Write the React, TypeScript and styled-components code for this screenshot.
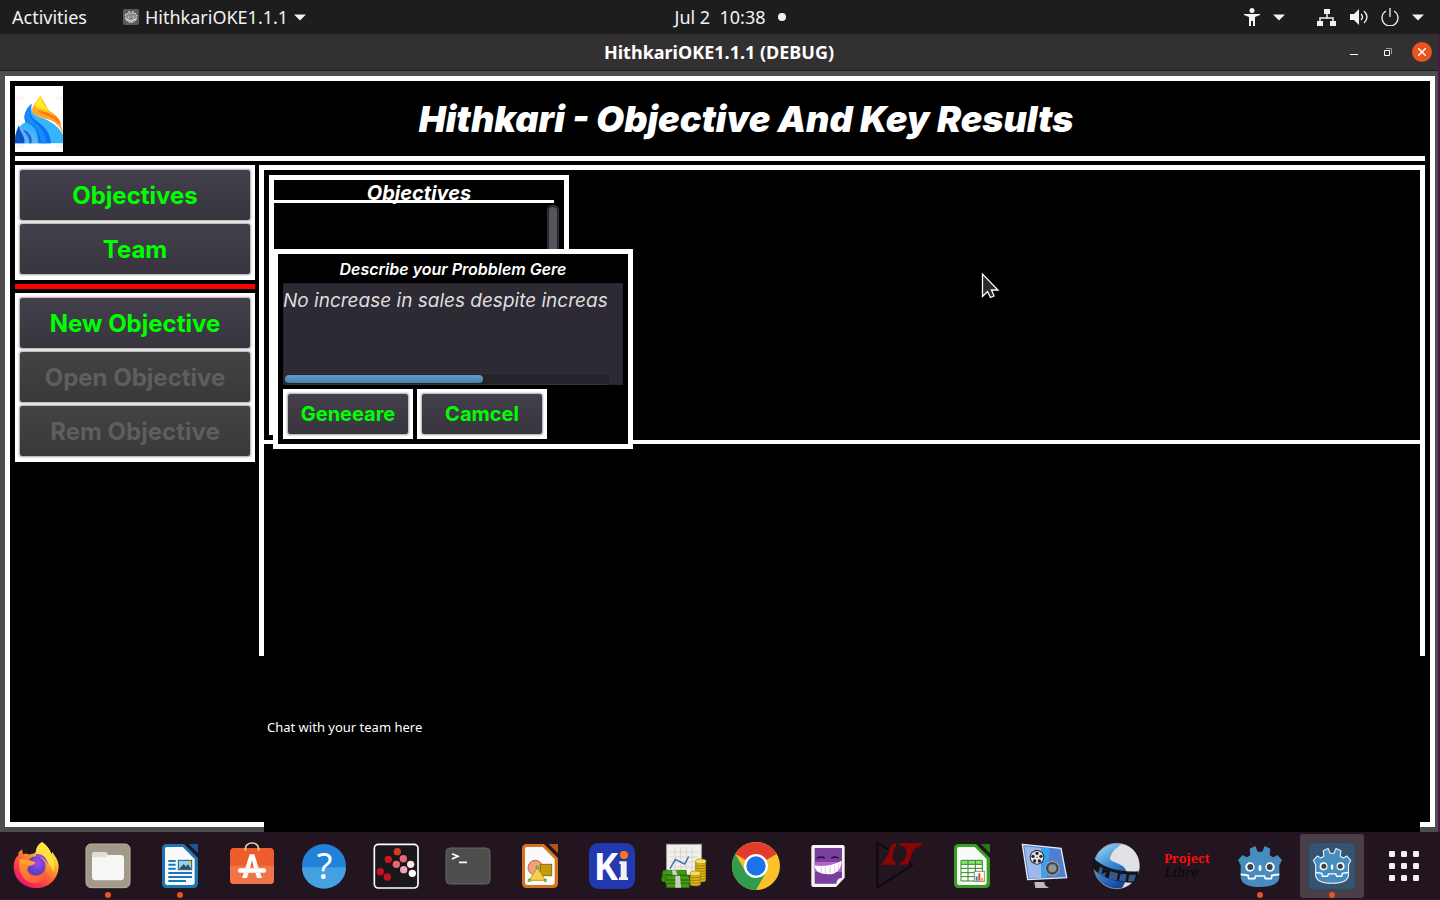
import React from "react";
import styled, { createGlobalStyle } from "styled-components";

const GlobalStyle = createGlobalStyle`
  * { box-sizing: border-box; }
  body {
    margin: 0;
    background: #4b1846;
    color: #fff;
    font-family: Inter, "Liberation Sans", sans-serif;
  }
  h1, h2, p { margin: 0; }
  button, textarea { font-family: inherit; }
  svg { display: block; }
`;

const systemFont = `"Noto Sans", "Open Sans", sans-serif`;

const Desktop = styled.div`
  min-height: 100vh;
  display: flex;
  flex-direction: column;
  overflow: hidden;
`;

/* ---------- system bar ---------- */

const SystemBar = styled.header`
  height: 34px;
  flex: none;
  display: grid;
  grid-template-columns: 1fr auto 1fr;
  align-items: center;
  background: #1d1d1d;
  color: #f2f2f2;
  font-family: ${systemFont};
  font-size: 18px;
  line-height: 24px;
`;

const BarGroup = styled.div<{ $end?: boolean }>`
  display: flex;
  align-items: center;
  justify-content: ${(p) => (p.$end ? "flex-end" : "flex-start")};
  gap: ${(p) => (p.$end ? "12px" : "36px")};
  padding: ${(p) => (p.$end ? "0 16px" : "0 12px")};
`;

const BarButton = styled.button<{ $gap?: number }>`
  display: flex;
  align-items: center;
  gap: ${(p) => p.$gap ?? 6}px;
  padding: 0;
  border: 0;
  background: none;
  color: inherit;
  font: inherit;
  white-space: pre;
`;

/* Padding balances the notification dot so that the time itself is centred. */
const ClockButton = styled(BarButton)`
  padding-left: 20px;
`;

const Dot = styled.span`
  width: 8px;
  height: 8px;
  border-radius: 50%;
  background: #f2f2f2;
`;

const Spacer = styled.span`
  width: 8px;
`;

/* ---------- window ---------- */

const Window = styled.section`
  flex: 1;
  display: flex;
  flex-direction: column;
  margin-right: 2px;
  background: #4d4d4d;
`;

const TitleBar = styled.div`
  height: 37px;
  flex: none;
  display: grid;
  grid-template-columns: 1fr auto 1fr;
  align-items: center;
  background: #333031;
  border-bottom: 1px solid #1f1e1e;
`;

const WindowTitle = styled.p`
  grid-column: 2;
  font: 700 18px/24px ${systemFont};
`;

const WindowControls = styled.div`
  display: flex;
  justify-content: flex-end;
  align-items: center;
  gap: 15px;
  padding-right: 6px;
`;

const ControlButton = styled.button<{ $close?: boolean }>`
  width: ${(p) => (p.$close ? "20px" : "19px")};
  height: 20px;
  display: grid;
  place-items: center;
  padding: 0;
  border: 0;
  border-radius: 50%;
  background: ${(p) => (p.$close ? "#e95420" : "transparent")};
`;

const Frame = styled.main`
  flex: 1;
  display: flex;
  flex-direction: column;
  gap: 4px;
  margin: 5px 3px 5px 5px;
  padding: 5px;
  border: 5px solid #fff;
  background: #000;
`;

const AppHeader = styled.header`
  display: flex;
  align-items: center;
  gap: 4px;
`;

const Logo = styled.span`
  width: 48px;
  height: 66px;
  background: #fff;
`;

const AppTitle = styled.h1`
  flex: 1;
  text-align: center;
  font-size: 36px;
  line-height: 44px;
  font-weight: 900;
  font-style: italic;
`;

const Rule = styled.div<{ $color?: string }>`
  height: 5px;
  flex: none;
  background: ${(p) => p.$color ?? "#fff"};
`;

const Body = styled.div`
  flex: 1;
  display: flex;
  gap: 4px;
`;

const Sidebar = styled.nav`
  width: 240px;
  flex: none;
  display: flex;
  flex-direction: column;
  gap: 4px;
`;

const ButtonGroup = styled.div`
  display: flex;
  flex-direction: column;
  gap: 4px;
  padding: 5px 5px 6px;
  background: #fff;
`;

const GameButton = styled.button<{ $compact?: boolean }>`
  height: ${(p) => (p.$compact ? "40px" : "50px")};
  width: ${(p) => (p.$compact ? "120px" : "100%")};
  padding: ${(p) => (p.$compact ? "0" : "2px 0 0")};
  border: 0;
  border-radius: 2px;
  background: linear-gradient(#43404b, #38353f);
  box-shadow: 0 0 2px 1px rgba(0, 0, 0, 0.35);
  color: #00ff00;
  font-size: ${(p) => (p.$compact ? "20px" : "24px")};
  line-height: 30px;
  font-weight: 700;
  &:disabled {
    background: linear-gradient(#434343, #393939);
    color: #5e5e5e;
  }
`;

const Content = styled.div`
  flex: 1;
  min-width: 0;
  display: flex;
  flex-direction: column;
`;

const Workspace = styled.section`
  display: flex;
  flex-direction: column;
  border: 5px solid #fff;
  border-bottom: 0;
`;

const Upper = styled.div`
  position: relative;
  min-height: 270px;
  padding: 5px;
`;

const Divider = styled.div`
  height: 4px;
  background: #fff;
`;

const Lower = styled.div`
  min-height: 212px;
`;

const ObjectivesPanel = styled.section`
  width: 300px;
  height: 260px;
  display: flex;
  flex-direction: column;
  border: 5px solid #fff;
`;

const PanelTitle = styled.h2`
  height: 20px;
  text-align: center;
  font-size: 20px;
  line-height: 26px;
  font-weight: 700;
  font-style: italic;
`;

const PanelList = styled.div`
  flex: 1;
  width: 285px;
  display: flex;
  justify-content: flex-end;
  padding-top: 2px;
`;

const PanelRule = styled.div`
  width: 280px;
  height: 3px;
  background: #fff;
`;

const ScrollTrack = styled.div<{ $horizontal?: boolean }>`
  width: ${(p) => (p.$horizontal ? "328px" : "12px")};
  height: ${(p) => (p.$horizontal ? "12px" : "auto")};
  padding: 2px;
  border-radius: 5px;
  background: #25232a;
  box-shadow: inset 0 0 0 1px #35323b;
`;

const ScrollThumb = styled.div<{ $horizontal?: boolean }>`
  width: ${(p) => (p.$horizontal ? "198px" : "8px")};
  height: ${(p) => (p.$horizontal ? "8px" : "100%")};
  border-radius: 4px;
  background: ${(p) =>
    p.$horizontal ? "linear-gradient(#5f9fca, #4a7fa9)" : "#56535c"};
`;

const Dialog = styled.form`
  position: absolute;
  left: 9px;
  top: 79px;
  width: 360px;
  display: flex;
  flex-direction: column;
  padding: 5px;
  border: 5px solid #fff;
  background: #000;
`;

const DialogLabel = styled.label`
  height: 24px;
  text-align: center;
  font-size: 16px;
  line-height: 20px;
  font-weight: 600;
  font-style: italic;
`;

const Editor = styled.div`
  position: relative;
  height: 102px;
  background: #2d2a33;
  box-shadow: inset 0 0 0 1px #25232b;
`;

const ProblemText = styled.textarea`
  display: block;
  width: 100%;
  height: 80px;
  padding: 5px 0 0;
  border: 0;
  outline: 0;
  resize: none;
  overflow: hidden;
  white-space: pre;
  background: transparent;
  color: #dedede;
  font-size: 19px;
  line-height: 26px;
  font-style: italic;
`;

const EditorScroll = styled.div`
  position: absolute;
  left: 0;
  bottom: 0;
`;

const DialogActions = styled.div`
  display: flex;
  gap: 4px;
  margin-top: 4px;
`;

const ActionFrame = styled.div`
  padding: 5px;
  background: #fff;
`;

const Pointer = styled.svg`
  position: absolute;
  left: 717px;
  top: 102px;
`;

/* The chat area runs past the window's lower edge. */
const Chat = styled.section`
  flex: 1;
  min-height: 176px;
  margin: 0 5px -15px;
  padding: 61px 3px;
  background: #000;
  font: 400 13px/20px "Noto Sans", sans-serif;
`;

/* ---------- dock ---------- */

const Dock = styled.nav`
  position: relative;
  height: 68px;
  flex: none;
  display: grid;
  grid-template-columns: repeat(20, 1fr);
  justify-items: center;
  padding: 2px 0 1px;
  background: #23151f;
  border-bottom: 1px solid #35192f;
`;

const DockButton = styled.button<{ $active?: boolean; $running?: boolean }>`
  position: relative;
  width: 64px;
  height: 64px;
  display: grid;
  place-items: center;
  padding: 0;
  border: 0;
  border-radius: 3px;
  background: ${(p) => (p.$active ? "#4a3f47" : "transparent")};
  &::after {
    content: "";
    display: ${(p) => (p.$running ? "block" : "none")};
    position: absolute;
    left: 29px;
    bottom: 0;
    width: 6px;
    height: 6px;
    border-radius: 50%;
    background: #e95420;
  }
`;

const Caret = () => (
  <svg width="12" height="7" viewBox="0 0 12 7" aria-hidden="true">
    <path d="M0 .5h12L6 6.5z" fill="#f2f2f2" />
  </svg>
);

const godotHead =
  "M14 70 L6 54 L20 39 L32 46 L43 40 L41 20 L58 12 L65 29 H79 L86 12 L103 20 L101 40 L112 46 L124 39 L138 54 L130 70 V104 C130 126 104 135 72 135 C40 135 14 126 14 104Z";

const GodotFace = ({ outlined }: { outlined?: boolean }) => (
  <g>
    <path
      d={godotHead}
      fill="#478cbf"
      stroke={outlined ? "#e6eff6" : "none"}
      strokeWidth={outlined ? 4 : 0}
      strokeLinejoin="round"
    />
    <path
      d="M14 97 L36 100 L38 110 H56 L59 102 H85 L88 110 H106 L108 100 L130 97"
      fill="none"
      stroke="#fff"
      strokeWidth="5"
    />
    <circle cx="42" cy="75" r="14" fill="#fff" />
    <circle cx="102" cy="75" r="14" fill="#fff" />
    <circle cx="43" cy="75" r="9" fill="#414042" />
    <circle cx="101" cy="75" r="9" fill="#414042" />
    <rect x="68" y="69" width="8" height="18" rx="4" fill="#fff" />
  </g>
);

const Firefox = () => (
  <g>
    <defs>
      <linearGradient id="ffBody" x1=".85" y1=".1" x2=".25" y2=".95">
        <stop offset="0" stopColor="#fff44f" />
        <stop offset=".3" stopColor="#ffb52a" />
        <stop offset=".6" stopColor="#ff5a36" />
        <stop offset="1" stopColor="#f0136f" />
      </linearGradient>
      <radialGradient id="ffGlobe" cx=".6" cy=".35">
        <stop offset="0" stopColor="#a34bf0" />
        <stop offset="1" stopColor="#5a3fc8" />
      </radialGradient>
      <linearGradient id="ffFox" x1="0" y1="0" x2="1" y2="1">
        <stop offset="0" stopColor="#ff9a2a" />
        <stop offset="1" stopColor="#ff4f3f" />
      </linearGradient>
    </defs>
    <path
      d="M90 0C104 10 114 22 118 36L121 30C134 48 140 60 140 74C138 112 110 138 73 138C34 138 5 110 5 74C5 58 10 48 19 39L20 31L30 22L33 37C42 34 48 36 52 38C60 34 67 36 73 29C72 16 78 8 90 0Z"
      fill="url(#ffBody)"
    />
    <path d="M90 0C104 10 116 24 119 42C126 54 130 70 125 88C116 70 104 50 74 44C66 28 76 8 90 0Z" fill="#ffe642" opacity=".85" />
    <circle cx="72" cy="72" r="29" fill="url(#ffGlobe)" />
    <path d="M72 36C92 34 106 48 108 68C98 48 88 44 72 44Z" fill="#9b3fe0" />
    <path
      d="M22 52C36 48 52 54 70 60C72 68 60 70 50 73C44 80 44 92 58 100C76 106 94 98 102 84C108 110 86 124 66 124C36 122 18 94 22 52Z"
      fill="url(#ffFox)"
    />
    <path d="M22 54C38 50 56 56 70 62C60 70 46 72 34 66Z" fill="#ffa22c" />
  </g>
);

const Files = () => (
  <g>
    <rect x="6" y="6" width="132" height="131" rx="15" fill="#a29a89" />
    <rect x="6" y="6" width="132" height="131" rx="15" fill="none" stroke="#bbb5a6" strokeWidth="3" />
    <path d="M24 42q0-12 10-12h28q6 0 10 9h38q10 0 10 10v56q0 10-10 10H34q-10 0-10-10z" fill="#f7f6f4" />
    <path d="M24 46v-6q0-10 10-10h28q6 0 10 9l-8 7z" fill="#deddd6" />
  </g>
);

const OfficePage = ({ color, dark }: { color: string; dark: string }) => (
  <g>
    <path d="M32 6h52l42 42v76q0 14-14 14H32q-14 0-14-14V20q0-14 14-14z" fill={color} />
    <path d="M32 15h48l36 36v70q0 8-8 8H34q-7 0-7-8V22q0-7 5-7z" fill="#fafafa" />
    <path d="M98 6h28v28z" fill={dark} />
  </g>
);

const Writer = () => (
  <g>
    <OfficePage color="#1d76b4" dark="#0f5d93" />
    <path d="M37 57h22M37 68h22M37 80h22M37 93h71M37 105h71M37 117h53" stroke="#1678b8" strokeWidth="6" />
    <rect x="67" y="55" width="40" height="28" fill="#8fd0f4" stroke="#175d8a" strokeWidth="3" />
    <path d="M69 82l14-16 7 8 6-7 10 15z" fill="#3c4a52" />
    <circle cx="100" cy="61" r="5" fill="#f4c320" />
  </g>
);

const Software = () => (
  <g>
    <rect x="6" y="18" width="132" height="108" rx="12" fill="#ed5d2c" />
    <path d="M6 72h132v42q0 12-12 12H18q-12 0-12-12z" fill="#f07648" />
    <path d="M52 26V20a20 17 0 0 1 40 0v6" fill="none" stroke="#f1cf9c" strokeWidth="5" />
    <path d="M65 37h14l13 42H78l-6-24-6 24H52zM48 92h14l-5 16H42zM82 92h14l6 16H87z" fill="#fff" />
    <rect x="30" y="79" width="84" height="13" rx="6" fill="#fff" />
  </g>
);

const Help = () => (
  <g>
    <circle cx="72" cy="72" r="66" fill="#2082d8" />
    <path d="M6 76a66 64 0 0 0 132 0z" fill="#43a1e2" />
    <text x="74" y="112" textAnchor="middle" fontFamily="Noto Sans, sans-serif" fontSize="108" fill="#fff">?</text>
  </g>
);

const Scatter = () => (
  <g>
    <rect x="7" y="7" width="131" height="131" rx="12" fill="#19171a" stroke="#fff" strokeWidth="5" />
    <circle cx="76" cy="29" r="11" fill="#d23b25" />
    <circle cx="49" cy="52" r="11" fill="#cf1523" />
    <circle cx="94" cy="50" r="11" fill="#e86775" />
    <circle cx="73" cy="67" r="11" fill="#e86775" />
    <circle cx="116" cy="67" r="11" fill="#fbe4e8" />
    <circle cx="95" cy="83" r="11" fill="#f2a5b5" />
    <circle cx="121" cy="94" r="11" fill="#fff" />
    <circle cx="25" cy="89" r="11" fill="#c71020" />
    <circle cx="46" cy="105" r="11" fill="#c71020" />
  </g>
);

const Terminal = () => (
  <g>
    <rect x="6" y="18" width="132" height="108" rx="12" fill="#4d4d4d" stroke="#666" strokeWidth="3" />
    <path d="M24 35l18 8-18 8M45 61h24" fill="none" stroke="#fff" strokeWidth="5" />
  </g>
);

const Draw = () => (
  <g>
    <OfficePage color="#d4741c" dark="#b35a10" />
    <circle cx="58" cy="77" r="22" fill="#f0a07c" stroke="#c8643c" strokeWidth="3" />
    <rect x="73" y="67" width="34" height="34" fill="#c39a10" stroke="#8d6c05" strokeWidth="3" />
    <path d="M64 77l24 38H40z" fill="#f6cf55" stroke="#c39a10" strokeWidth="3" />
    <path d="M61 74h6v6h-6zM37 112h6v6h-6zM85 112h6v6h-6z" fill="#fff" stroke="#33a02c" strokeWidth="3" />
  </g>
);

const KiCad = () => (
  <g>
    <rect x="3" y="3" width="138" height="138" rx="28" fill="#2438b0" />
    <text x="17" y="114" fontFamily="Noto Sans, sans-serif" fontWeight="700" fontSize="110" fill="#fff">K</text>
    <path d="M94 58h22v48h4v8H93v-8h5V66h-4z" fill="#f1f1f1" />
    <circle cx="108" cy="39" r="12" fill="#ff7a0c" />
  </g>
);

const Coins = ({ x, y, n }: { x: number; y: number; n: number }) => (
  <g>
    <rect x={x} y={y} width="32" height={n * 8} fill="#b08a06" />
    {Array.from({ length: n }, (_, i) => n - i).map((i) => (
      <ellipse key={i} cx={x + 16} cy={y + i * 8} rx="16" ry="6" fill="#d9b51c" stroke="#8a6b04" strokeWidth="2" />
    ))}
    <ellipse cx={x + 16} cy={y} rx="16" ry="7" fill="#f4e069" stroke="#a98708" strokeWidth="2" />
  </g>
);

const Finance = () => (
  <g>
    <rect x="20" y="7" width="104" height="92" fill="#f1f1ec" stroke="#aaa" strokeWidth="3" />
    <path d="M30 30h84M30 45h84M30 60h84M30 75h84M45 15v75M62 15v75M79 15v75M96 15v75" stroke="#c9ccc6" strokeWidth="2" />
    <path d="M30 80l16-28 28 14 12-22" fill="none" stroke="#3b68ad" strokeWidth="4" />
    <Coins x={106} y={58} n={7} />
    <g fill="#419a18" stroke="#256507" strokeWidth="2">
      <path d="M10 85h68l2 14H6zM6 99h74v8H6zM4 107h76v12H6z" />
      <path d="M20 101h66l4 13H16zM16 114h74v10H16zM18 124h70v13H20z" />
    </g>
    <path d="M36 85h12l4 14H38zM46 101h14l3 36H46z" fill="#c9cfbf" />
    <Coins x={90} y={94} n={4} />
  </g>
);

const Chrome = () => (
  <g>
    <circle cx="72" cy="72" r="72" fill="#fbc12b" />
    <path d="M72 72L10 36A72 72 0 0 1 134 36z" fill="#e33b2e" />
    <path d="M41 90L10 36A72 72 0 0 0 72 144L103 90z" fill="#2f9c4e" />
    <circle cx="72" cy="72" r="36" fill="#fff" />
    <circle cx="72" cy="72" r="29" fill="#1a73e8" />
  </g>
);

const Comic = () => (
  <g>
    <path d="M28 9h88q6 0 6 6v92l-26 28H28q-6 0-6-6V15q0-6 6-6z" fill="#f5f5f5" />
    <path d="M32 18h82v90q-16 0-17 17H32z" fill="#7a3f9c" />
    <path d="M32 60h82v30H32z" fill="#b565c8" />
    <path d="M38 49q14-8 24 0M82 49q12-8 22 0" fill="none" stroke="#24102e" strokeWidth="4" />
    <path d="M31 70q40 8 82-14-2 40-40 41-38 0-42-27z" fill="#fff" />
    <path d="M52 75v17M64 75v20M78 73v21M92 69v21M104 63v18" stroke="#cfa8dc" strokeWidth="2" />
  </g>
);

const LtSpice = () => (
  <g>
    <path d="M36 22L4 3v134l105-68-12-8" fill="none" stroke="#09060a" strokeWidth="4" />
    <path d="M62 3C48 4 44 12 40 26C36 42 26 54 16 68H62L58 62C46 54 48 30 60 14Z" fill="#8b0505" />
    <path d="M72 3H140L130 16H122C110 22 106 42 96 68H70L72 63C90 54 98 32 86 14L70 10Z" fill="#8b0505" />
  </g>
);

const Calc = () => (
  <g>
    <OfficePage color="#35a01f" dark="#237c10" />
    <path d="M39 55h64v62H39z" fill="#fff" />
    <path d="M39 55h64v12H39z" fill="#8fe077" />
    <path d="M39 55h64v62H39zM39 67h64M39 79h64M39 92h64M39 104h64M60 55v62M82 55v62" fill="none" stroke="#2c8a1b" strokeWidth="3" />
    <rect x="79" y="88" width="30" height="30" fill="#fff" stroke="#888" strokeWidth="3" />
    <path d="M83 103h6v13h-6z" fill="#1a8fd0" />
    <path d="M91 94h6v22h-6z" fill="#e3501c" />
    <path d="M99 108h6v8h-6z" fill="#efb519" />
  </g>
);

const Recorder = () => (
  <g>
    <path d="M7 7l116 12 17 88-117 6z" fill="#4f7fd0" stroke="#e8ecf2" strokeWidth="4" />
    <path d="M13 13l50 5 2 90-38 1z" fill="#9fb8ea" />
    <path d="M63 18h26l-8 89H65z" fill="#39a2ee" />
    <circle cx="51" cy="46" r="22" fill="#26262c" />
    <circle cx="51" cy="46" r="19" fill="#e6e8ea" />
    {[[51, 34], [63, 43], [58, 57], [44, 57], [39, 43]].map(([x, y]) => (
      <circle key={`${x}-${y}`} cx={x} cy={y} r="5" fill="#26262c" />
    ))}
    <circle cx="51" cy="46" r="2" fill="#26262c" />
    <circle cx="97" cy="79" r="21" fill="#46494e" stroke="#9b9ea4" strokeWidth="4" />
    <circle cx="97" cy="79" r="12" fill="#8e949c" />
    <path d="M43 120h30l2 10 12 8H46z" fill="#b9bcba" />
  </g>
);

const OpenShot = () => (
  <g>
    <defs>
      <linearGradient id="osBall" x1="0" y1="0" x2=".6" y2="1">
        <stop offset="0" stopColor="#a9e2fa" />
        <stop offset=".5" stopColor="#3b8bd2" />
        <stop offset="1" stopColor="#0e3c9c" />
      </linearGradient>
    </defs>
    <circle cx="74" cy="72" r="68" fill="url(#osBall)" stroke="#8d9196" strokeWidth="3" />
    <path d="M90 6c36 8 54 36 52 72-4 30-28 54-52 60 20-30 18-54 2-66C74 60 46 58 56 42 64 24 76 14 90 6z" fill="#dfe1e3" />
    <path d="M2 46c30 32 80 46 138 42l-6 34C80 124 24 108 0 76z" fill="#141518" />
    <path d="M24 74l20 10-6 22-20-12zM54 88l24 6-4 22-24-6zM86 96l18 1-4 22-20-3zM112 98h20l-6 20h-18z" fill="#33598e" />
    <path d="M32 78l14 10-16 8z" fill="#0b0b0c" />
  </g>
);

const ProjectLibre = () => (
  <g>
    <text x="0" y="62" fontFamily="Noto Serif, DejaVu Serif, serif" fontWeight="700" fontSize="38" fill="#fb0d0d">Project</text>
    <text x="2" y="104" fontFamily="DejaVu Serif, serif" fontStyle="italic" fontSize="38" fill="#090508">Libre</text>
  </g>
);

const GodotApp = () => (
  <g>
    <rect x="2" y="2" width="140" height="140" rx="14" fill="#365370" stroke="#2d4962" strokeWidth="3" />
    <g transform="translate(11 9) scale(.85)">
      <GodotFace outlined />
    </g>
  </g>
);

const AppsGrid = () => (
  <g fill="#f2f0f1">
    {[27, 63, 99].map((y) =>
      [27, 63, 99].map((x) => <rect key={`${x}-${y}`} x={x} y={y} width="18" height="18" rx="4" />)
    )}
  </g>
);

const dockItems: { name: string; art: React.ComponentType; running?: boolean; active?: boolean }[] = [
  { name: "Firefox", art: Firefox },
  { name: "Files", art: Files, running: true },
  { name: "Writer", art: Writer, running: true },
  { name: "Software", art: Software },
  { name: "Help", art: Help },
  { name: "Scatter", art: Scatter },
  { name: "Terminal", art: Terminal },
  { name: "Draw", art: Draw },
  { name: "KiCad", art: KiCad },
  { name: "Finance", art: Finance },
  { name: "Chrome", art: Chrome },
  { name: "Comics", art: Comic },
  { name: "LTspice", art: LtSpice },
  { name: "Calc", art: Calc },
  { name: "Recorder", art: Recorder },
  { name: "OpenShot", art: OpenShot },
  { name: "ProjectLibre", art: ProjectLibre },
  { name: "Godot", art: GodotFace, running: true },
  { name: "HithkariOKE", art: GodotApp, running: true, active: true },
  { name: "Show applications", art: AppsGrid },
];

export default function App() {
  return (
    <Desktop>
      <GlobalStyle />
      <SystemBar>
        <BarGroup>
          <BarButton>Activities</BarButton>
          <BarButton>
            <svg width="16" height="16" viewBox="0 0 16 16" aria-hidden="true">
              <rect width="16" height="16" rx="2" fill="#5b5b5b" />
              <path d="M2 6l2-2 1 1 1-3 1 2h2l1-2 1 3 1-1 2 2-1 5q-5 5-10 0z" fill="#8d8d8d" stroke="#ddd" strokeWidth="1" strokeDasharray="2 1" />
              <path d="M3 10l3 1 1 1h2l1-1 3-1M5 8h1M10 8h1" fill="none" stroke="#eee" />
            </svg>
            HithkariOKE1.1.1
            <Caret />
          </BarButton>
        </BarGroup>
        <ClockButton $gap={12}>
          {"Jul 2  10:38"}
          <Dot />
        </ClockButton>
        <BarGroup $end>
          <BarButton $gap={13} aria-label="Accessibility">
            <svg width="16" height="18" viewBox="0 0 16 18" aria-hidden="true">
              <circle cx="8" cy="2.500" r="2.500" fill="#f2f2f2" />
              <path d="M0 6h16v1l-5 2v9H9v-5H7v5H5V9L0 7z" fill="#f2f2f2" />
            </svg>
            <Caret />
          </BarButton>
          <Spacer />
          <BarButton $gap={13} aria-label="System menu">
            <svg width="20" height="17" viewBox="0 0 20 17" aria-hidden="true">
              <path d="M7 0h6v5H7zM0 12h6v5H0zM13 12h6v5h-6z" fill="#f2f2f2" />
              <path d="M10 5v4M3 12V9h13v3" fill="none" stroke="#f2f2f2" strokeWidth="1.500" />
            </svg>
            <svg width="18" height="18" viewBox="0 0 18 18" aria-hidden="true">
              <path d="M0 6h4l5-5v16l-5-5H0z" fill="#f2f2f2" />
              <path d="M11 6q3 3 0 6M14 3q6 6 0 12" fill="none" stroke="#f2f2f2" strokeWidth="1.300" />
            </svg>
            <svg width="18" height="18" viewBox="0 0 18 18" aria-hidden="true">
              <path d="M5 3a8 8 0 1 0 8 0M9 0v9" fill="none" stroke="#f2f2f2" strokeWidth="1.300" />
            </svg>
            <Caret />
          </BarButton>
        </BarGroup>
      </SystemBar>

      <Window>
        <TitleBar>
          <WindowTitle>HithkariOKE1.1.1 (DEBUG)</WindowTitle>
          <WindowControls>
            <ControlButton aria-label="Minimize">
              <svg width="8" height="8" viewBox="0 0 8 8"><path d="M0 6h8v1H0z" fill="#fff" /></svg>
            </ControlButton>
            <ControlButton aria-label="Restore">
              <svg width="8" height="8" viewBox="0 0 8 8">
                <path d="M2 .5h5.500V6" fill="none" stroke="#999" />
                <path d="M.5 2.500h5v5h-5z" fill="none" stroke="#fff" />
              </svg>
            </ControlButton>
            <ControlButton $close aria-label="Close">
              <svg width="8" height="8" viewBox="0 0 8 8"><path d="M0 0l8 8M8 0L0 8" stroke="#fff" strokeWidth="1.400" /></svg>
            </ControlButton>
          </WindowControls>
        </TitleBar>

        <Frame>
          <AppHeader>
            <Logo>
              <svg width="48" height="66" viewBox="0 0 144 198" role="img" aria-label="Hithkari logo">
                <path d="M50 54C30 70 24 92 32 108C18 114 8 130 0 150V172H144V146C134 124 110 108 88 98C62 90 44 84 50 54Z" fill="#38b4fb" />
                <path d="M50 54C30 70 24 92 32 108C60 118 70 140 70 172H108C106 140 88 122 66 106C46 92 42 80 50 54Z" fill="#0a70ff" />
                <path d="M50 54C28 72 26 98 40 110C66 122 74 140 78 172H94C92 140 76 122 58 108C40 92 40 76 50 54Z" fill="#1a8cf6" />
                <path d="M12 118C4 134 0 146 0 172H68C66 150 56 138 40 132C24 126 16 132 12 118Z" fill="#5cb2f7" />
                <path d="M12 118C4 138 0 146 0 172H28C32 150 12 138 12 118Z" fill="#0c50c4" />
                <path d="M24 130C28 144 44 148 42 172H50C54 150 40 136 24 130Z" fill="#1d6bd8" />
                <path d="M76 30C64 50 48 62 52 78C62 96 92 94 114 106C130 116 140 130 144 144C144 126 134 112 122 100C94 86 76 76 78 58Z" fill="#f9a62b" />
                <path d="M76 30C66 46 58 52 62 66C76 88 108 84 138 118C138 100 118 84 102 74Q88 52 76 30Z" fill="#ff7414" />
                <path d="M76 30C66 46 54 58 62 70C80 78 104 76 122 96C114 80 94 70 88 60Z" fill="#ffc21a" />
                <path d="M76 30C68 46 56 54 64 62C80 70 90 66 104 76C94 64 82 50 76 30Z" fill="#fff01c" />
                <path d="M6 36h24M120 36h24M2 180h28M120 180h24" stroke="#f8f8f8" strokeWidth="10" />
              </svg>
            </Logo>
            <AppTitle>Hithkari - Objective And Key Results</AppTitle>
          </AppHeader>
          <Rule />
          <Body>
            <Sidebar>
              <ButtonGroup>
                <GameButton>Objectives</GameButton>
                <GameButton>Team</GameButton>
              </ButtonGroup>
              <Rule $color="#ff0000" />
              <ButtonGroup>
                <GameButton>New Objective</GameButton>
                <GameButton disabled>Open Objective</GameButton>
                <GameButton disabled>Rem Objective</GameButton>
              </ButtonGroup>
            </Sidebar>
            <Content>
              <Workspace>
                <Upper>
                  <ObjectivesPanel>
                    <PanelTitle>Objectives</PanelTitle>
                    <PanelRule />
                    <PanelList>
                      <ScrollTrack><ScrollThumb /></ScrollTrack>
                    </PanelList>
                  </ObjectivesPanel>
                  <Dialog onSubmit={(e) => e.preventDefault()}>
                    <DialogLabel htmlFor="problem">Describe your Probblem Gere</DialogLabel>
                    <Editor>
                      <ProblemText id="problem" wrap="off" spellCheck={false} defaultValue="No increase in sales despite increas" />
                      <EditorScroll>
                        <ScrollTrack $horizontal><ScrollThumb $horizontal /></ScrollTrack>
                      </EditorScroll>
                    </Editor>
                    <DialogActions>
                      <ActionFrame><GameButton $compact type="submit">Geneeare</GameButton></ActionFrame>
                      <ActionFrame><GameButton $compact type="button">Camcel</GameButton></ActionFrame>
                    </DialogActions>
                  </Dialog>
                  <Pointer width="20" height="28" viewBox="0 0 20 28" aria-hidden="true">
                    <path d="M1.500 2v22.500l5-5 3 6 3.500-1.500-2.500-6H17z" fill="#2b2b2b" stroke="#fff" strokeWidth="1.300" />
                  </Pointer>
                </Upper>
                <Divider />
                <Lower />
              </Workspace>
              <Chat>
                <p>Chat with your team here</p>
              </Chat>
            </Content>
          </Body>
        </Frame>
      </Window>

      <Dock aria-label="Applications">
        {dockItems.map(({ name, art: Art, running, active }) => (
          <DockButton key={name} aria-label={name} $running={running} $active={active}>
            <svg width="48" height="48" viewBox="0 0 144 144" overflow="visible" aria-hidden="true">
              <Art />
            </svg>
          </DockButton>
        ))}
      </Dock>
    </Desktop>
  );
}
